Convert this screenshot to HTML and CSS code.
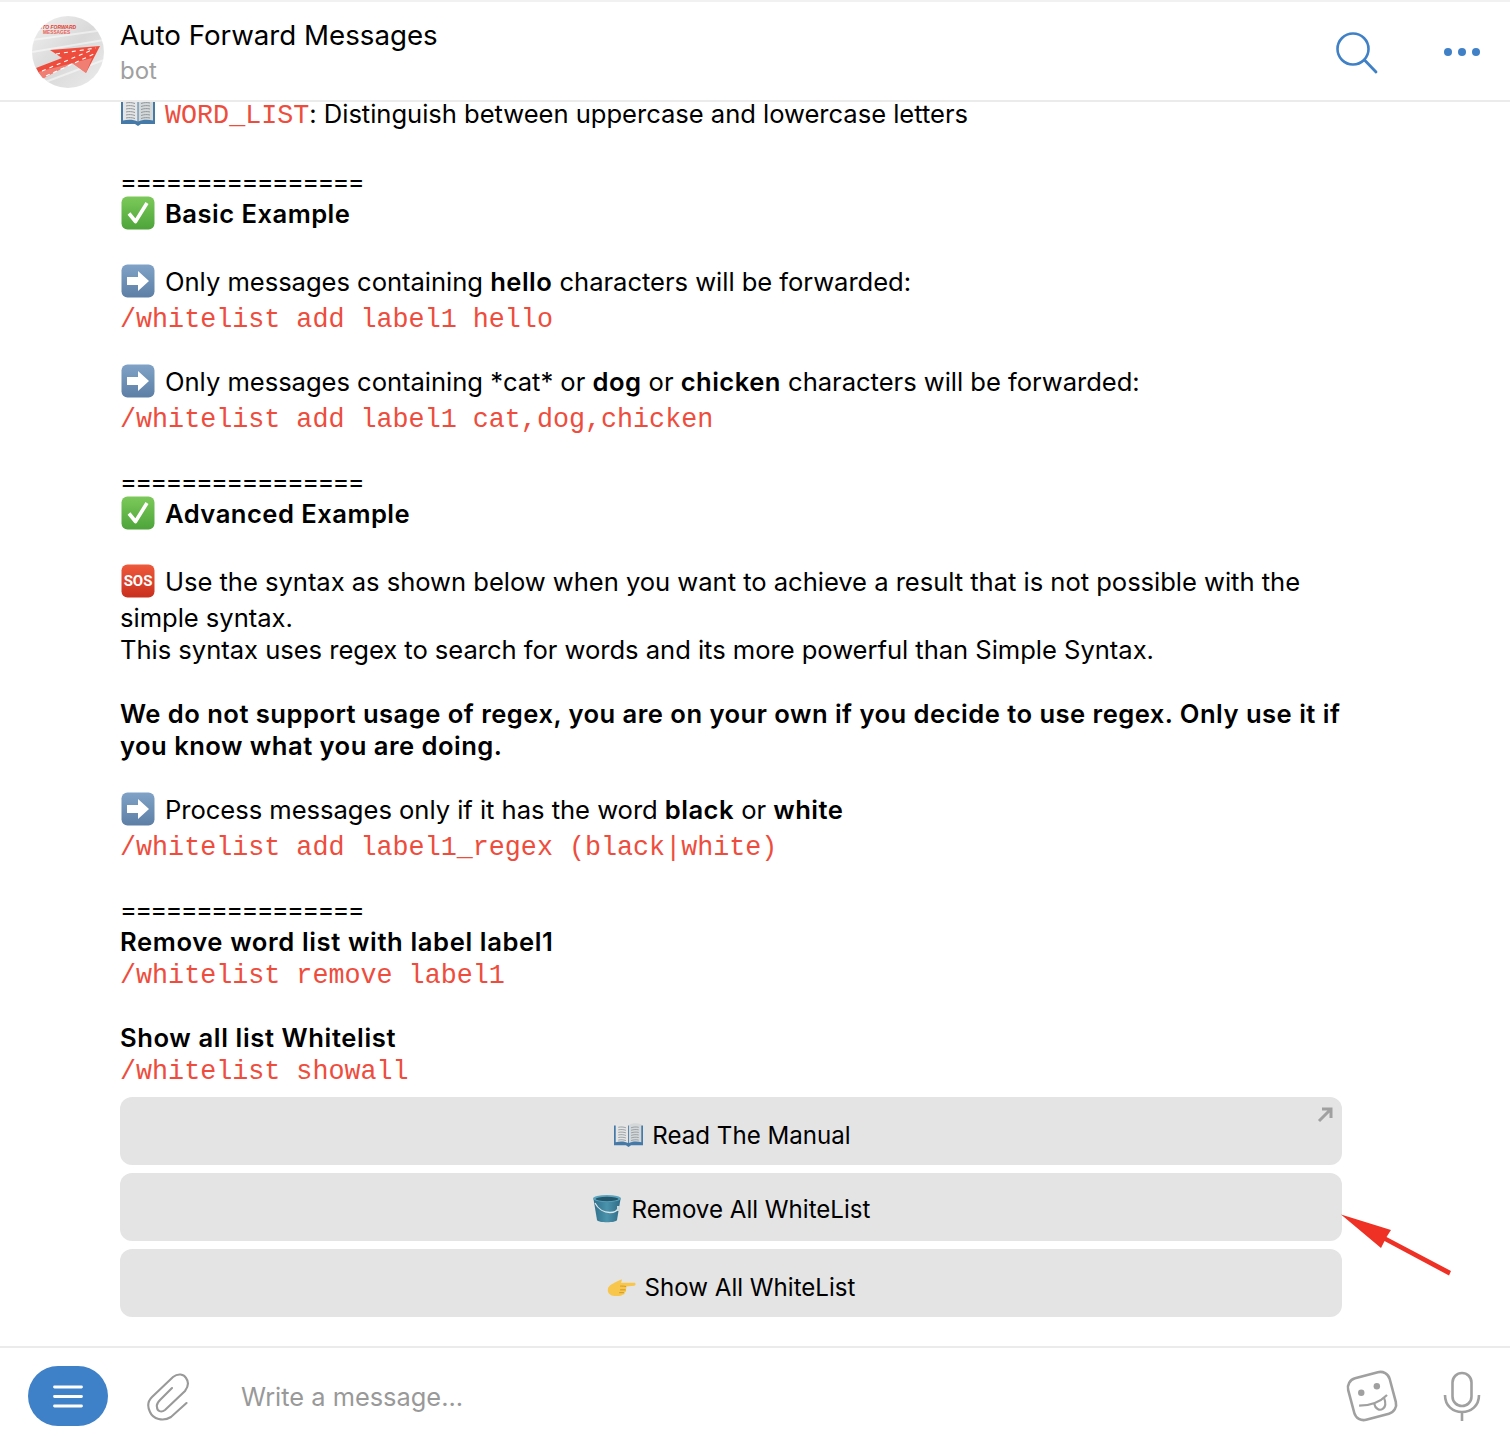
FILE: index.html
```html
<!DOCTYPE html>
<html lang="en">
<head>
<meta charset="utf-8">
<title>Auto Forward Messages</title>
<link rel="stylesheet" href="styles.css">
</head>
<body>
<svg class="defs" width="0" height="0" aria-hidden="true">
  <defs>
    <linearGradient id="greenG" x1="0" y1="0" x2="0" y2="1"><stop offset="0" stop-color="#7cc95a"/><stop offset="1" stop-color="#4da43a"/></linearGradient>
    <linearGradient id="blueG" x1="0" y1="0" x2="0" y2="1"><stop offset="0" stop-color="#7fa2c6"/><stop offset="1" stop-color="#5d7fa6"/></linearGradient>
    <linearGradient id="redG" x1="0" y1="0" x2="0" y2="1"><stop offset="0" stop-color="#ee5a3c"/><stop offset="1" stop-color="#c92f1e"/></linearGradient>
    <linearGradient id="bucketG" x1="0" y1="0" x2="1" y2="0"><stop offset="0" stop-color="#2f6f8a"/><stop offset=".5" stop-color="#4b93ad"/><stop offset="1" stop-color="#2f6a85"/></linearGradient>
    <linearGradient id="avatarG" x1="0" y1="0" x2="1" y2="1"><stop offset="0" stop-color="#f1f1f1"/><stop offset=".5" stop-color="#d9d9d9"/><stop offset="1" stop-color="#ececec"/></linearGradient>
    <symbol id="e-book" viewBox="0 0 34 28">
      <path d="M0 3h34v23H20l-3 2-3-2H0z" fill="#4479a8"/>
      <path d="M2 1.500c5-2 11.500-1.500 14.500 1v21c-3-2-9.500-2.500-14.500-1z" fill="#e4e5e4"/>
      <path d="M32 1.500c-5-2-11.500-1.500-14.500 1v21c3-2 9.500-2.500 14.500-1z" fill="#d4d8d9"/>
      <path d="M5 5c3-.7 6-.5 9 .5M5 8c3-.7 6-.5 9 .5M5 11c3-.7 6-.5 9 .5M5 14c3-.7 6-.5 9 .5M5 17c3-.7 6-.5 9 .5M5 20c3-.7 6-.5 9 .5M29 5c-3-.7-6-.5-9 .5M29 8c-3-.7-6-.5-9 .5M29 11c-3-.7-6-.5-9 .5M29 14c-3-.7-6-.5-9 .5M29 17c-3-.7-6-.5-9 .5M29 20c-3-.7-6-.5-9 .5" stroke="#8f979c" stroke-width="1" fill="none"/>
    </symbol>
    <symbol id="e-check" viewBox="0 0 34 34">
      <rect x="0.500" y="0.500" width="33" height="33" rx="6" fill="url(#greenG)"/>
      <path d="M8 17.500l6.500 8L26 7" fill="none" stroke="#fff" stroke-width="3.600" stroke-linejoin="round"/>
    </symbol>
    <symbol id="e-arrow" viewBox="0 0 34 34">
      <rect x="0.500" y="0.500" width="33" height="33" rx="6" fill="url(#blueG)"/>
      <path d="M6 13h11V7l11 10-11 10v-6H6z" fill="#fff"/>
    </symbol>
    <symbol id="e-sos" viewBox="0 0 34 34">
      <rect x="0.500" y="0.500" width="33" height="33" rx="6" fill="url(#redG)"/>
      <text x="17" y="22" text-anchor="middle" class="sos-text">SOS</text>
    </symbol>
    <symbol id="e-bucket" viewBox="0 0 30 30">
      <path d="M1.500 5h27l-3.500 21c-.5 3-19.500 3-20 0z" fill="url(#bucketG)"/>
      <ellipse cx="15" cy="4.500" rx="14" ry="3.500" fill="#5ba5bf"/>
      <ellipse cx="15" cy="5" rx="11.500" ry="2.200" fill="#24566c"/>
      <path d="M3 9c3 6 9 9.500 15 9.500 4 0 7-1.500 8-4" fill="none" stroke="#dfe5e7" stroke-width="1.300"/>
      <rect x="25" y="12" width="3" height="5" fill="#cfd8db"/>
    </symbol>
    <symbol id="e-hand" viewBox="0 0 32 20">
      <path d="M1 11c1-3 5-5 8-6.500 3-1.500 5-3 7-3l-1 3.500h14c2 0 2 3 0 3l-9 1c1 1 1 2 0 3 1 1 0 3-1 3 0 2-1 2.500-2 2.500-1 1-2 1.500-4 1.500H8c-4 0-8-3-7-8z" fill="#f8c64a"/>
      <path d="M14 8.500c2 0 5 0 6.500.5M14 12.500h6M13 15.500h5" stroke="#c98f2a" stroke-width=".9" fill="none"/>
    </symbol>
  </defs>
</svg>

<div class="app">
  <header class="top">
    <svg class="avatar" viewBox="32 16 72 72" aria-hidden="true">
      <clipPath id="avatarClip"><circle cx="68" cy="52" r="36"/></clipPath>
      <g clip-path="url(#avatarClip)">
        <rect x="32" y="16" width="72" height="72" fill="url(#avatarG)"/>
        <path d="M32 40L104 30M32 52L104 40M40 84L104 60" stroke="#fff" stroke-opacity=".5" stroke-width="2"/>
        <text x="35" y="29" class="avatar-t1">AUTO FORWARD</text>
        <text x="43" y="34" class="avatar-t2">MESSAGES</text>
        <path d="M100 46L50 50L62 58L36 68L42 79L72 63L86 73z" fill="#ee4d3d"/>
        <path d="M42 79L72 63L86 73L92 58L38 72z" fill="#f4a79f" fill-opacity=".55"/>
        <path d="M42 71L92 50M46 76L94 54M56 54L96 48" stroke="#fff" stroke-width="1.100" stroke-dasharray="4 4" fill="none"/>
      </g>
    </svg>
    <div class="peer">
      <div class="peer-name">Auto Forward Messages</div>
      <div class="peer-status">bot</div>
    </div>
    <svg class="ico-search" viewBox="0 0 44 44" aria-hidden="true"><circle cx="18" cy="17" r="15.500" fill="none" stroke="#3f80c6" stroke-width="2.600"/><path d="M29.500 28L41 40" stroke="#3f80c6" stroke-width="2.800" stroke-linecap="round"/></svg>
    <svg class="ico-more" viewBox="0 0 40 8" aria-hidden="true"><circle cx="4" cy="4" r="4" fill="#3f80c6"/><circle cx="18" cy="4" r="4" fill="#3f80c6"/><circle cx="32" cy="4" r="4" fill="#3f80c6"/></svg>
  </header>

  <main class="chat">
    <div class="line tall"><svg class="emoji book"><use href="#e-book"/></svg><code>WORD_LIST</code>: Distinguish between uppercase and lowercase letters</div>
    <div class="line"></div>
    <div class="line rule">================</div>
    <div class="line tall"><svg class="emoji"><use href="#e-check"/></svg><b>Basic Example</b></div>
    <div class="line"></div>
    <div class="line tall"><svg class="emoji"><use href="#e-arrow"/></svg>Only messages containing <b>hello</b> characters will be forwarded:</div>
    <div class="line"><code>/whitelist add label1 hello</code></div>
    <div class="line"></div>
    <div class="line tall"><svg class="emoji"><use href="#e-arrow"/></svg>Only messages containing *cat* or <b>dog</b> or <b>chicken</b> characters will be forwarded:</div>
    <div class="line"><code>/whitelist add label1 cat,dog,chicken</code></div>
    <div class="line"></div>
    <div class="line rule">================</div>
    <div class="line tall"><svg class="emoji"><use href="#e-check"/></svg><b>Advanced Example</b></div>
    <div class="line"></div>
    <div class="line tall"><svg class="emoji"><use href="#e-sos"/></svg>Use the syntax as shown below when you want to achieve a result that is not possible with the</div>
    <div class="line">simple syntax.</div>
    <div class="line">This syntax uses regex to search for words and its more powerful than Simple Syntax.</div>
    <div class="line"></div>
    <div class="line"><b>We do not support usage of regex, you are on your own if you decide to use regex. Only use it if</b></div>
    <div class="line"><b>you know what you are doing.</b></div>
    <div class="line"></div>
    <div class="line tall"><svg class="emoji"><use href="#e-arrow"/></svg>Process messages only if it has the word <b>black</b> or <b>white</b></div>
    <div class="line"><code>/whitelist add label1_regex (black|white)</code></div>
    <div class="line"></div>
    <div class="line rule">================</div>
    <div class="line"><b class="wide">Remove word list with label label1</b></div>
    <div class="line"><code>/whitelist remove label1</code></div>
    <div class="line"></div>
    <div class="line"><b class="wide">Show all list Whitelist</b></div>
    <div class="line"><code>/whitelist showall</code></div>

    <div class="keys">
      <div class="key key-a"><svg class="key-emoji book-key"><use href="#e-book"/></svg>Read The Manual
        <svg class="key-link" viewBox="0 0 16 16" aria-hidden="true"><path d="M2 14L14 2M5 2h9v9" fill="none" stroke="#a0a0a0" stroke-width="3"/></svg>
      </div>
      <div class="key key-b"><svg class="key-emoji bucket-key"><use href="#e-bucket"/></svg>Remove All WhiteList</div>
      <div class="key key-a"><svg class="key-emoji hand-key"><use href="#e-hand"/></svg>Show All WhiteList</div>
    </div>
    <svg class="pointer" viewBox="1340 1214 112 62" aria-hidden="true"><path d="M1341 1214.500L1391 1230L1386.500 1237L1451 1271L1449 1275.500L1384.500 1241L1381 1248z" fill="#ee3124"/></svg>
  </main>

  <footer class="composer">
    <div class="menu-btn"><svg viewBox="0 0 30 24" aria-hidden="true"><path d="M1.500 3h27M1.500 12.500h27M1.500 22h27" stroke="#fff" stroke-width="2.800" stroke-linecap="round"/></svg></div>
    <svg class="ico-clip" viewBox="145 1370 45 50" aria-hidden="true"><path d="M186.500 1402L171 1416C163 1421 153 1418 150 1411C147 1405 148 1400 152 1396L173 1376C178 1372 184 1373 186 1377C189 1381 188 1386 185 1390L165 1409C161 1412 157 1410 157 1406C156 1403 158 1401 160 1399L172 1387" fill="none" stroke="#999" stroke-width="2.100" stroke-linecap="round"/></svg>
    <div class="placeholder">Write a message...</div>
    <svg class="ico-sticker" viewBox="0 0 54 54" aria-hidden="true">
      <rect x="7" y="7" width="40" height="40" rx="9" transform="rotate(-15 27 27)" fill="none" stroke="#a0a0a0" stroke-width="2.400"/>
      <circle cx="17" cy="24" r="3" fill="#a0a0a0"/><circle cx="31.500" cy="18" r="3" fill="#a0a0a0"/>
      <path d="M15 36c8 0 18-2 26-10" fill="none" stroke="#a0a0a0" stroke-width="2"/>
      <path d="M29 34c1 5 5 7 8 5s3-6 1-11" fill="none" stroke="#a0a0a0" stroke-width="2"/>
    </svg>
    <svg class="ico-mic" viewBox="0 0 38 50" aria-hidden="true"><rect x="9.500" y="2" width="19" height="33" rx="9.500" fill="none" stroke="#a0a0a0" stroke-width="2.600"/><path d="M2 24c0 11 8 17 17 17s17-6 17-17M19 41v9" fill="none" stroke="#a0a0a0" stroke-width="2.600"/></svg>
  </footer>
</div>
</body>
</html>
```

FILE: styles.css
```css
* { box-sizing: border-box; }
html, body { margin: 0; background: #fff; }
body { font-family: Inter, "Liberation Sans", sans-serif; color: #000; overflow: hidden; }
.defs { position: absolute; }

.app { width: 1510px; height: 1440px; display: flex; flex-direction: column; overflow: hidden; }

.top {
  position: relative;
  z-index: 2;
  flex: none;
  height: 102px;
  display: flex;
  align-items: center;
  padding: 0 26px 0 32px;
  background: #fff;
  border-top: 2px solid #f1f1f1;
  border-bottom: 2px solid #ebebeb;
}
.avatar { width: 72px; height: 72px; flex: none; margin-top: 2px; }
.avatar-t1 { font: italic 700 5px "Liberation Sans", sans-serif; fill: #e33b2e; }
.avatar-t2 { font: 700 4.800px "Liberation Sans", sans-serif; fill: #e86257; }
.peer { margin-left: 16px; flex: 1; padding-top: 3px; }
.peer-name { font-size: 27.700px; line-height: 36px; margin-top: -1px; }
.peer-status { font-size: 24px; line-height: 35px; color: #a0a0a0; }
.ico-search { width: 44px; height: 44px; margin-right: 65px; margin-top: 6px; flex: none; }
.ico-more { width: 40px; height: 8px; flex: none; margin-top: 2px; }

.chat {
  position: relative;
  flex: 1;
  margin-top: -4px;
  padding-left: 120px;
  min-height: 0;
}
.line {
  height: 32px;
  line-height: 32px;
  font-size: 25.600px;
  letter-spacing: -0.04px;
  white-space: nowrap;
}
.line.tall { height: 36px; }
.line.rule { letter-spacing: -1.750px; }
.line b { font-weight: 600; letter-spacing: 0.47px; }
.line b.wide { letter-spacing: 0.62px; }
code {
  font-family: "Liberation Mono", monospace;
  font-size: 26.720px;
  letter-spacing: 0;
  color: #ee4d3d;
}
.emoji { width: 34px; height: 34px; margin: -6px 10px -6px 1px; vertical-align: -1px; }
.emoji.book { height: 28px; vertical-align: 3px; }
.sos-text { font: 700 15px "Roboto", sans-serif; fill: #fff; }

.keys { width: 1222px; margin: 11px 0 0 0; display: flex; flex-direction: column; gap: 8px; }
.key {
  position: relative;
  height: 68px;
  border-radius: 12px;
  background: #e4e4e4;
  display: flex;
  align-items: center;
  justify-content: center;
  font-size: 24.100px;
}
.key-a { padding-top: 8px; }
.key-b { padding-top: 4px; }
.key-emoji { flex: none; margin-right: 10px; }
.book-key { width: 29px; height: 24px; margin-right: 9px; margin-left: 3px; }
.bucket-key { width: 30px; height: 30px; }
.hand-key { width: 30px; height: 19px; margin-right: 8px; }
.key-link { position: absolute; top: 10px; right: 9px; width: 16px; height: 16px; }
.pointer { position: absolute; left: 1340px; top: 1116px; width: 112px; height: 62px; }

.composer {
  flex: none;
  height: 94px;
  display: flex;
  align-items: center;
  padding: 4px 29px 0 28px;
  border-top: 2px solid #ebebeb;
}
.menu-btn {
  width: 80px;
  height: 60px;
  border-radius: 30px;
  background: #3e81c8;
  display: flex;
  align-items: center;
  justify-content: center;
  flex: none;
}
.menu-btn svg { width: 30px; height: 24px; }
.ico-clip { width: 45px; height: 50px; margin-left: 37px; flex: none; }
.placeholder { margin-left: 51px; flex: 1; font-size: 25.400px; color: #999; padding-top: 1px; }
.ico-sticker { width: 58px; height: 58px; flex: none; margin-right: 42px; }
.ico-mic { width: 38px; height: 50px; flex: none; }
```
